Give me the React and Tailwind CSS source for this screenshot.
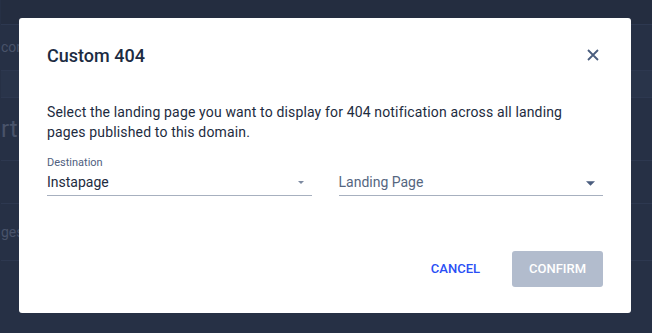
import React from 'react';

const Arrow = ({ className }) => (
  <svg viewBox="0 0 10 5" className={className} fill="currentColor">
    <path d="M0 0h10L5 5z" />
  </svg>
);

const Select = ({ label, value, placeholder, arrowClass }) => (
  <div className="flex-1 flex flex-col">
    <span className="text-[11px] leading-[14px] text-[#4f6080] h-[14px]">{label}</span>
    <div className="flex items-center justify-between h-[26px] border-b border-[#a7b0bf] pr-2">
      <span className={`text-[14px] ${placeholder ? 'text-[#55667f]' : 'text-[#1d2b40]'}`}>{value}</span>
      <Arrow className={arrowClass} />
    </div>
  </div>
);

export default function App() {
  return (
    <div className="relative w-[652px] h-[333px] overflow-hidden bg-[#263045] font-['Roboto',sans-serif]">
      {/* page behind the overlay */}
      <div className="flex flex-col text-[#49536a] pl-[1px]">
        <div className="h-[24px] bg-[#242d40]" />
        <div className="h-[46px] border-t border-[#2d3850] flex items-center text-[14px]">con</div>
        <div className="h-[27px] border-t border-[#2d3850] bg-[#29344a]" />
        <div className="h-[63px] border-t border-[#2d3850] flex items-center text-[24px]">rt.n</div>
        <div className="h-[43px] border-t border-[#2d3850]" />
        <div className="h-[57px] border-t border-[#2d3850] flex items-center text-[14px]">ges</div>
        <div className="flex-1 border-t border-[#2d3850]" />
      </div>

      {/* modal */}
      <div className="absolute left-[19px] top-[18px] w-[612px] h-[295px] bg-white rounded-[3px] flex flex-col px-[28px]">
        <div className="flex items-center justify-between pt-[22px] h-[74px] pb-[22px]">
          <h2 className="text-[18px] font-medium text-[#1c2b42]">Custom 404</h2>
          <svg viewBox="0 0 12 12" className="w-[12px] h-[12px] text-[#4a5d7e] mr-[4px]" stroke="currentColor" strokeWidth="1.8" fill="none">
            <path d="M1 1l10 10M11 1L1 11" />
          </svg>
        </div>
        <p className="text-[14px] leading-[20px] tracking-[0.15px] text-[#1d2b40] mt-[10px] max-w-[540px]">
          Select the landing page you want to display for 404 notification across all landing pages published to this domain.
        </p>
        <div className="flex gap-[27px] mt-[14px]">
          <Select label="Destination" value="Instapage" arrowClass="w-[6px] h-[3px] text-[#7d8aa1]" />
          <Select label="" value="Landing Page" placeholder arrowClass="w-[9px] h-[5px] text-[#4a5d7e] mt-[2px]" />
        </div>
        <div className="flex-1" />
        <div className="flex items-center justify-end gap-[32px] pb-[26px]">
          <button className="text-[13px] font-medium text-[#2a4ff5]">CANCEL</button>
          <button className="w-[91px] h-[36px] rounded-[3px] bg-[#b2bccd] text-white text-[13px] font-medium">CONFIRM</button>
        </div>
      </div>
    </div>
  );
}
